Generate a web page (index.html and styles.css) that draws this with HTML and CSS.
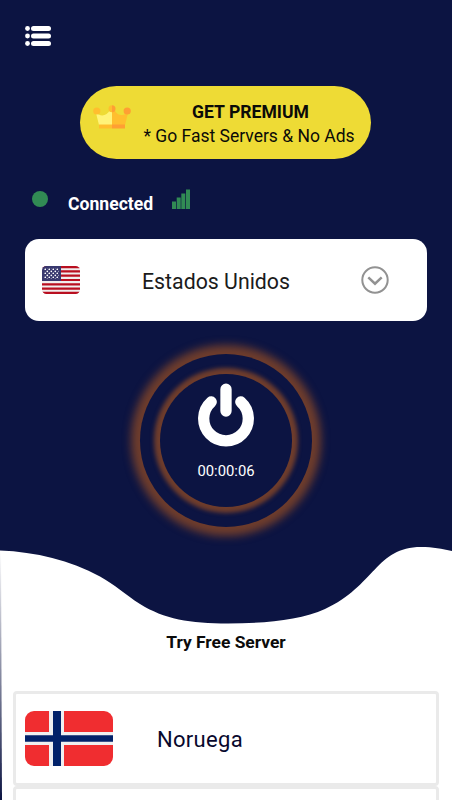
FILE: index.html
```html
<!DOCTYPE html>
<html lang="en">
<head>
<meta charset="utf-8">
<title>VPN</title>
<link rel="stylesheet" href="styles.css">
</head>
<body>
<main class="screen">
  <svg class="wave" viewBox="0 0 452 260" aria-hidden="true">
    <defs><linearGradient id="edge" x1="0" y1="0" x2="0" y2="1"><stop offset="0" stop-color="#fff"/><stop offset="1" stop-color="#0c1442"/></linearGradient></defs>
    <path fill="#fff" d="M0 10.500C36 12 70 20 100 36.500C115 44.700 125 54.500 140 64C164 79 190 83.500 228 83.500C265 83.500 301 80 325 69C375 46 376 7 421 7C433 7 442 9 452 11V260H0Z"/>
    <path fill="url(#edge)" d="M0 11H1L2 260H0Z"/>
  </svg>
  <header class="top">
    <svg class="menu" viewBox="0 0 26 20" fill="#fff"><circle cx="2.500" cy="2.500" r="2.400"/><circle cx="2.500" cy="10" r="2.400"/><circle cx="2.500" cy="17.500" r="2.400"/><rect x="6" width="20" height="5" rx="2.500"/><rect x="6" y="7.500" width="20" height="5" rx="2.500"/><rect x="6" y="15" width="20" height="5" rx="2.500"/></svg>
  </header>
  <section class="premium">
    <svg class="crown" viewBox="0 0 38 25">
      <path fill="#fff378" d="M3 8C8 12 14 11 17 5L19 3V20H6Z"/>
      <path fill="#ffbe2e" d="M19 3L22 6C25 11 29 11 35 8L32 20H19Z"/>
      <path fill="#ffbe2e" d="M6 19.500H19V23.500H6Z"/><path fill="#ff9f33" d="M19 19.500H32V23.500H19Z"/>
      <circle cx="3.800" cy="6" r="3.600" fill="#ffbe2e"/><circle cx="34.200" cy="6" r="3.600" fill="#ff9f33"/>
      <path fill="#ffbe2e" d="M19 .2A3.500 3.500 0 0 0 19 7.200Z"/><path fill="#ff9f33" d="M19 .2A3.500 3.500 0 0 1 19 7.200Z"/>
    </svg>
    <div class="premium-text"><strong>GET PREMIUM</strong><span>* Go Fast Servers &amp; No Ads</span></div>
  </section>
  <section class="status">
    <i class="dot"></i><strong>Connected</strong>
    <svg class="signal" viewBox="0 0 18 20" fill="#318b54"><path d="M0 12.500H4V20H0ZM4.700 8.500H8.700V20H4.700ZM9.300 4.500H13.300V20H9.300ZM14 .5H18V20H14Z"/></svg>
  </section>
  <section class="country">
    <svg class="us" viewBox="0 0 38 28">
      <defs>
        <clipPath id="us-clip"><rect width="38" height="28" rx="4.500"/></clipPath>
        <pattern id="stars" width="4" height="4" patternUnits="userSpaceOnUse"><circle cx="1.300" cy="1.300" r=".85" fill="#fff"/><circle cx="3.300" cy="3.300" r=".85" fill="#fff"/></pattern>
      </defs>
      <g clip-path="url(#us-clip)"><path fill="#f0eeee" d="M0 0H38V28H0Z"/>
      <path stroke="#b90f20" stroke-width="2.150" d="M0 1.080H38M0 5.380H38M0 9.690H38M0 14H38M0 18.310H38M0 22.620H38M0 26.920H38"/>
      <path fill="#38386e" d="M0 0H19V15H0Z"/><path fill="url(#stars)" d="M2 2H17V13H2Z"/></g>
    </svg>
    <span class="country-name">Estados Unidos</span>
    <svg class="chevron" viewBox="0 0 28 28" fill="none" stroke="#929292" stroke-width="2"><circle cx="14" cy="14" r="12.700"/><path stroke-width="2.500" d="M7.300 11.300L14 17.700L20.700 11.300"/></svg>
  </section>
  <section class="outer-ring">
    <div class="inner-ring">
      <svg class="power" viewBox="0 0 56 64" fill="none" stroke="#fff" stroke-width="11.300" stroke-linecap="round"><path d="M13.200 18.900A22.300 22.300 0 1 0 42.800 18.900M28 6.200V28"/></svg>
      <span class="timer">00:00:06</span>
    </div>
  </section>
  <h1 class="title">Try Free Server</h1>
  <section class="servers">
    <article class="server">
      <svg class="norway" viewBox="0 0 88 55"><defs><clipPath id="no-clip"><rect width="88" height="55" rx="9"/></clipPath></defs>
      <g clip-path="url(#no-clip)"><path fill="#f02d30" d="M0 0H88V55H0Z"/><path fill="#efeff0" d="M24 0H39V55H24ZM0 21H88V34H0Z"/><path fill="#012169" d="M28 0H36V55H28ZM0 24.300H88V30.700H0Z"/></g></svg>
      <span>Noruega</span>
    </article>
    <article class="server"></article>
  </section>
</main>
</body>
</html>
```
FILE: styles.css
```css
* { box-sizing: border-box; }
body { margin: 0; font-family: Roboto, "Liberation Sans", sans-serif; }
.screen { position: relative; width: 452px; height: 800px; overflow: hidden; background: #0c1442; display: flex; flex-direction: column; isolation: isolate; }
.screen > * { flex: none; }
.wave { position: absolute; left: 0; bottom: 0; width: 452px; height: 260px; z-index: -1; }
svg { display: block; flex: none; }
.top { height: 86px; padding: 26px 0 0 25px; }
.menu { width: 26px; height: 20px; }
.premium { width: 291px; height: 73px; margin-left: 80px; border-radius: 37px; background: #eedb35; display: flex; padding: 19px 0 0 13px; }
.crown { width: 38px; height: 25px; }
.premium-text { width: 212px; margin: -5px 0 0 12px; display: flex; flex-direction: column; align-items: center; color: #0b0b08; font-size: 17.5px; line-height: 24px; white-space: nowrap; }
.premium-text strong { margin-left: 3px; font-size: 17.6px; font-weight: 700; }
.status { height: 80px; padding: 30px 0 0 32px; display: flex; color: #fff; }
.dot { width: 16px; height: 16px; margin-top: 2px; border-radius: 50%; background: #318b54; }
.status strong { width: 86px; margin: 3px 18px 0 20px; font-size: 17.6px; line-height: 25px; }
.signal { width: 18px; height: 20px; }
.country { width: 402px; height: 82px; margin-left: 25px; border-radius: 14px; background: #fff; display: flex; padding-left: 17px; }
.us { width: 38px; height: 28px; margin-top: 27px; }
.country-name { width: 149px; margin: 29px 70px 0 62px; color: #1b1b1b; font-size: 21.3px; line-height: 28px; white-space: nowrap; }
.chevron { width: 28px; height: 28px; margin-top: 27px; }
.outer-ring { width: 172px; height: 173px; margin: 33px auto 0; padding-top: 20px; border-radius: 50%; background: #0c1442; box-shadow: 0 0 8px 9px #6f3d2c; }
.inner-ring { width: 132px; height: 133px; margin: 0 auto; border-radius: 50%; background: #0c1442; box-shadow: 0 0 4px 6px #6f3d2c; display: flex; flex-direction: column; align-items: center; }
.power { width: 56px; height: 64px; margin-top: 9px; }
.timer { margin-top: 14px; color: #fff; font-size: 14.8px; line-height: 20px; }
.title { margin: 103px 0 0; text-align: center; color: #0b0b0b; font-size: 17.4px; line-height: 24px; font-weight: 700; }
.servers { margin: 37px 13px 0; }
.server { height: 95px; border: 3px solid #eaeaea; border-radius: 4px; background: #fff; display: flex; padding: 17px 0 0 9px; }
.norway { width: 88px; height: 55px; }
.server span { margin: 15px 0 0 44px; color: #08082d; font-size: 22px; letter-spacing: .3px; line-height: 28px; }
```
